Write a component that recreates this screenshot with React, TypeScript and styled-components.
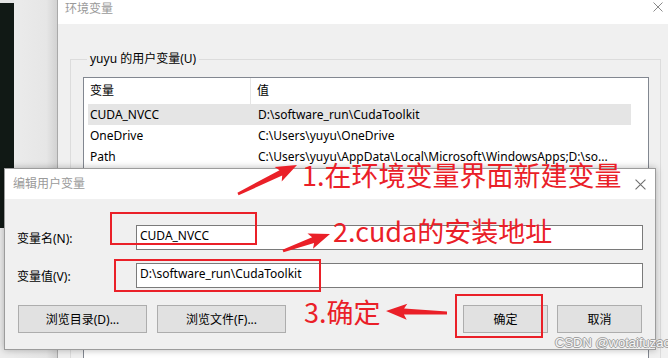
import styled, { createGlobalStyle } from "styled-components";

const GlobalStyle = createGlobalStyle`
  html, body {
    margin: 0;
    padding: 0;
    background: #f0f0f0;
  }
  body {
    font-family: "Noto Sans", "Noto Sans CJK SC", sans-serif;
    font-size: 12px;
    color: #000;
  }
`;

const RED = "#ea2028";

type Pt = [number, number];

// tapered arrow polygon from tail to tip
const arrowShape = (tail: Pt, tip: Pt, head = 18, half = 8, w0 = 1.4, w1 = 3) => {
  const dx = tip[0] - tail[0];
  const dy = tip[1] - tail[1];
  const len = Math.hypot(dx, dy);
  const ux = dx / len;
  const uy = dy / len;
  const nx = -uy;
  const ny = ux;
  const bx = tip[0] - ux * head;
  const by = tip[1] - uy * head;
  const pts: Pt[] = [
    [tail[0] + nx * w0, tail[1] + ny * w0],
    [bx + nx * w1, by + ny * w1],
    [bx - ux * 3 + nx * half, by - uy * 3 + ny * half],
    tip,
    [bx - ux * 3 - nx * half, by - uy * 3 - ny * half],
    [bx - nx * w1, by - ny * w1],
    [tail[0] - nx * w0, tail[1] - ny * w0],
  ];
  return pts.map((p) => p.map((v) => v.toFixed(1)).join(",")).join(" ");
};

const envRows = [
  { name: "CUDA_NVCC", value: "D:\\software_run\\CudaToolkit", selected: true },
  { name: "OneDrive", value: "C:\\Users\\yuyu\\OneDrive" },
  { name: "Path", value: "C:\\Users\\yuyu\\AppData\\Local\\Microsoft\\WindowsApps;D:\\so..." },
];

const Desktop = styled.div`
  position: relative;
  width: 668px;
  height: 358px;
  overflow: hidden;
  display: flex;
`;

const DarkStrip = styled.div`
  width: 14px;
  flex: none;
  background: linear-gradient(to bottom, #e4e4e4 0 3px, #111915 3px 228px, #ececec 228px);
`;

const GreyGap = styled.div`
  width: 43px;
  flex: none;
  background: linear-gradient(to right, #ebebeb, #e6e6e6 75%, #d2d2d2);
`;

const EnvWindow = styled.div`
  flex: 1;
  display: flex;
  flex-direction: column;
  border-left: 1px solid #a9a9a9;
  background: #f0f0f0;
`;

const EnvTitleBar = styled.div`
  height: 24px;
  flex: none;
  background: #fff;
  display: flex;
  justify-content: space-between;
  align-items: flex-start;
  padding: 2px 5px 0 7px;
  box-sizing: border-box;
`;

const TitleText = styled.span`
  font-size: 12px;
  line-height: 14px;
  color: #9a9a9a;
`;

const EnvBody = styled.div`
  flex: 1;
  display: flex;
  padding: 27px 7px 0 12px;
  min-height: 0;
`;

const Group = styled.fieldset`
  flex: 1;
  margin: 0;
  padding: 10px 11px 0 12px;
  border: 1px solid #dcdcdc;
  border-bottom: none;
  display: flex;
  min-width: 0;

  legend {
    margin-left: 4px;
    padding: 0 3px;
    font-size: 12px;
    line-height: 16px;
  }
`;

const ListBox = styled.div`
  flex: 1;
  background: #fff;
  border: 1px solid #828790;
  border-bottom: none;
  padding-right: 17px;
`;

const HeaderRow = styled.div`
  display: grid;
  grid-template-columns: 167px 1fr;
  height: 26px;
  line-height: 26px;
`;

const HeaderCell = styled.div<{ $divider?: boolean }>`
  padding-left: 6px;
  border-right: ${(p) => (p.$divider ? "1px solid #e5e5e5" : "none")};
`;

const ListRow = styled.div<{ $selected?: boolean }>`
  display: grid;
  grid-template-columns: 163px 1fr;
  height: 21px;
  line-height: 21px;
  margin-left: 4px;
  background: ${(p) => (p.$selected ? "#e5e5e5" : "transparent")};
  white-space: nowrap;
  overflow: hidden;
`;

const ListCell = styled.div<{ $value?: boolean }>`
  padding-left: ${(p) => (p.$value ? "7px" : "2px")};
  overflow: hidden;
`;

const Dialog = styled.div`
  position: absolute;
  left: 4px;
  top: 168px;
  width: 652px;
  height: 182px;
  box-sizing: border-box;
  border: 1px solid #9c9c9c;
  box-shadow: 0 0 7px rgba(0, 0, 0, 0.28);
  background: #f0f0f0;
  display: flex;
  flex-direction: column;
`;

const DialogTitleBar = styled.div`
  height: 30px;
  flex: none;
  background: #fff;
  display: flex;
  align-items: center;
  justify-content: space-between;
  padding: 0 9px 0 8px;
`;

const DialogBody = styled.div`
  flex: 1;
  padding: 26px 12px 0 12px;
  display: flex;
  flex-direction: column;
`;

const FormRow = styled.div`
  display: grid;
  grid-template-columns: 119px 1fr;
  align-items: center;
  margin-bottom: 13px;
`;

const Label = styled.label`
  font-size: 12px;
`;

const Field = styled.div`
  height: 25px;
  box-sizing: border-box;
  border: 1px solid #7a7a7a;
  background: #fff;
  padding-left: 3px;
  line-height: 20px;
  font-size: 12px;
`;

const ButtonRow = styled.div`
  margin-top: 4px;
  display: flex;
  justify-content: space-between;
  padding: 0 1px;
`;

const ButtonGroup = styled.div<{ $gap: number }>`
  display: flex;
  gap: ${(p) => p.$gap}px;
`;

const Button = styled.div<{ $w: number }>`
  width: ${(p) => p.$w}px;
  height: 28px;
  box-sizing: border-box;
  border: 1px solid #adadad;
  background: #e1e1e1;
  display: flex;
  align-items: center;
  justify-content: center;
  font-size: 12px;
`;

const Overlay = styled.svg`
  position: absolute;
  left: 0;
  top: 0;
  pointer-events: none;
`;

const Mark = styled.div`
  position: absolute;
  border: 2px solid ${RED};
  box-sizing: border-box;
`;

const Note = styled.div`
  position: absolute;
  color: ${RED};
  font-family: "Noto Sans CJK SC", sans-serif;
  font-size: 27px;
  line-height: 1;
  white-space: nowrap;
`;

const Watermark = styled.div`
  position: absolute;
  left: 555px;
  top: 335px;
  font-family: "Liberation Sans", "Noto Sans", sans-serif;
  font-size: 13px;
  line-height: 16px;
  color: #f6f6f6;
  text-shadow: 1px 0 0 #a0a0a0, -1px 0 0 #a0a0a0, 0 1px 0 #a0a0a0, 0 -1px 0 #a0a0a0;
  white-space: nowrap;
`;

const CloseIcon = ({ size, color }: { size: number; color: string }) => (
  <svg width={size} height={size} viewBox="0 0 10 10">
    <path d="M0.5 0.5 L9.5 9.5 M9.5 0.5 L0.5 9.5" stroke={color} strokeWidth="1" fill="none" />
  </svg>
);

export default function App() {
  return (
    <>
      <GlobalStyle />
      <Desktop>
        <DarkStrip />
        <GreyGap />
        <EnvWindow>
          <EnvTitleBar>
            <TitleText>环境变量</TitleText>
            <CloseIcon size={10} color="#8a8a8a" />
          </EnvTitleBar>
          <EnvBody>
            <Group>
              <legend>yuyu 的用户变量(U)</legend>
              <ListBox>
                <HeaderRow>
                  <HeaderCell $divider>变量</HeaderCell>
                  <HeaderCell>值</HeaderCell>
                </HeaderRow>
                {envRows.map((r) => (
                  <ListRow key={r.name} $selected={r.selected}>
                    <ListCell>{r.name}</ListCell>
                    <ListCell $value>{r.value}</ListCell>
                  </ListRow>
                ))}
              </ListBox>
            </Group>
          </EnvBody>
        </EnvWindow>

        <Dialog>
          <DialogTitleBar>
            <TitleText>编辑用户变量</TitleText>
            <CloseIcon size={11} color="#6f6f6f" />
          </DialogTitleBar>
          <DialogBody>
            <FormRow>
              <Label>变量名(N):</Label>
              <Field>CUDA_NVCC</Field>
            </FormRow>
            <FormRow>
              <Label>变量值(V):</Label>
              <Field>D:\software_run\CudaToolkit</Field>
            </FormRow>
            <ButtonRow>
              <ButtonGroup $gap={10}>
                <Button $w={129}>浏览目录(D)...</Button>
                <Button $w={129}>浏览文件(F)...</Button>
              </ButtonGroup>
              <ButtonGroup $gap={9}>
                <Button $w={85}>确定</Button>
                <Button $w={85}>取消</Button>
              </ButtonGroup>
            </ButtonRow>
          </DialogBody>
        </Dialog>

        <Mark style={{ left: 110, top: 212, width: 147, height: 33 }} />
        <Mark style={{ left: 114, top: 259, width: 207, height: 33 }} />
        <Mark style={{ left: 455, top: 294, width: 88, height: 44 }} />

        <Note style={{ left: 302, top: 161 }}>1.在环境变量界面新建变量</Note>
        <Note style={{ left: 333, top: 217 }}>2.cuda的安装地址</Note>
        <Note style={{ left: 304, top: 298 }}>3.确定</Note>

        <Overlay width={668} height={358}>
          <polygon points={arrowShape([238, 194], [297, 165])} fill={RED} />
          <polygon points={arrowShape([283, 251], [330, 234])} fill={RED} />
          <polygon points={arrowShape([447, 313], [386, 311])} fill={RED} />
        </Overlay>

        <Watermark>CSDN @wotaifuzao</Watermark>
      </Desktop>
    </>
  );
}
